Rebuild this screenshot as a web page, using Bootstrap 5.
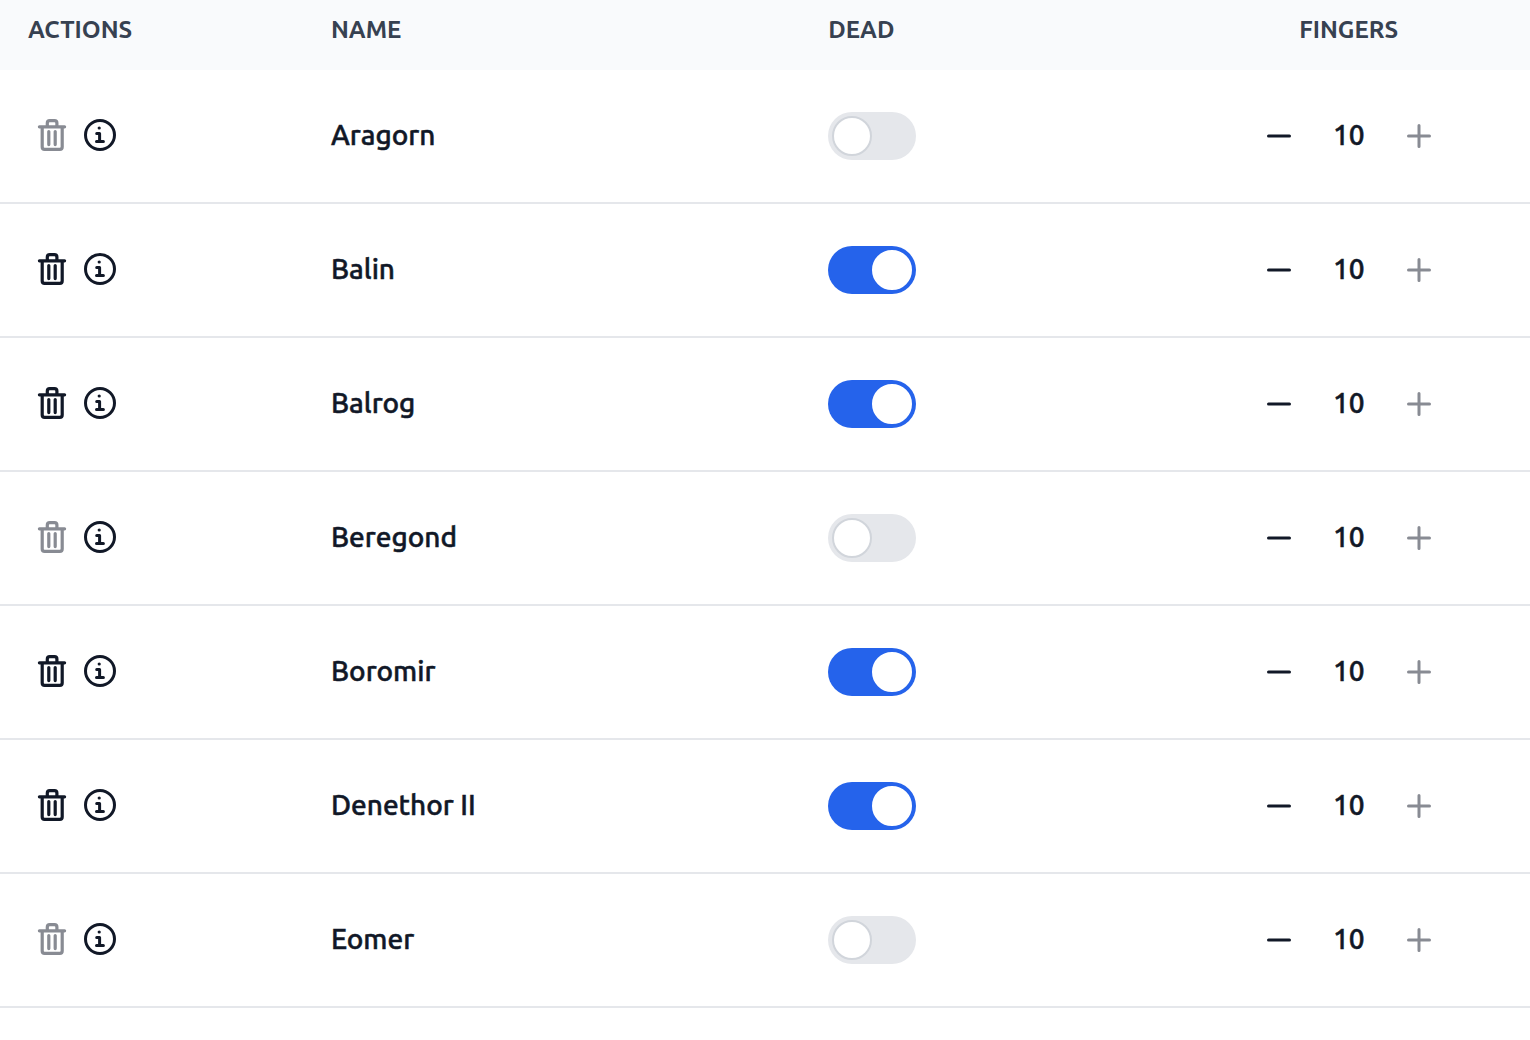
<!DOCTYPE html>
<html lang="en">
<head>
<meta charset="utf-8">
<meta name="viewport" content="width=device-width, initial-scale=1">
<title>Characters</title>
<link href="https://cdn.jsdelivr.net/npm/bootstrap@5.3.0/dist/css/bootstrap.min.css" rel="stylesheet">
<style>
  body { font-family: Ubuntu, "Noto Sans", sans-serif; color: #111827; background: #fff; }
  .roster { table-layout: fixed; border-collapse: separate; border-spacing: 0; color: #111827; font-size: 28px; line-height: 40px; font-weight: 500; }
  .roster > thead th { height: 70px; padding: 10px 28px 20px; background: #f9fafc; color: #374151; font-size: 24px; line-height: 40px; font-weight: 700; border: 0; text-transform: uppercase; vertical-align: top; }
  .roster > tbody td { height: 134px; padding: 0 28px; color: #111827; border-bottom: 2px solid #e5e7eb; background: #fff; box-shadow: none; }
  .roster > tbody td.person { padding-bottom: 2px; }
  .person, .count { font-family: "Ubuntu Medium", Ubuntu, "Noto Sans", sans-serif; -webkit-text-stroke: 0.5px currentColor; }
  .w-actions { width: 19.8%; }
  .w-name { width: 32.5%; }
  .w-dead { width: 24%; }
  .icon-btn { width: 48px; height: 48px; padding: 0; border: 0; background: none; color: #111827; display: inline-flex; align-items: center; justify-content: center; }
  .icon-btn:disabled { color: #888b93; }
  .icon-btn svg { width: 32px; height: 32px; fill: none; stroke: currentColor; stroke-width: 3; stroke-linecap: round; stroke-linejoin: round; }
  .tools { padding-bottom: 2px; }
  .count { width: 92px; padding-bottom: 2px; text-align: center; }
  .toggle { appearance: none; display: block; width: 88px; height: 48px; margin: 0; padding: 4px; border-radius: 24px; background: #e5e7eb; cursor: pointer; }
  .toggle::before { content: ""; display: block; width: 40px; height: 40px; border-radius: 50%; border: 2px solid #d1d5db; background: #fff; }
  .toggle:checked { background: #2563eb; }
  .toggle:checked::before { margin-left: auto; border-color: #fff; }
</style>
</head>
<body>
<svg class="d-none" aria-hidden="true">
  <symbol id="trash" viewBox="0 0 32 32"><path d="M3.4 7.8H28.6M11.3 7.5V4Q11.3 1.6 13.7 1.6H18.5Q20.9 1.6 20.9 4V7.5M6.2 8V28Q6.2 30.4 8.6 30.4H23.8Q26.2 30.4 26.2 28V8M12.8 12.5V25.6M19.2 12.5V25.6" stroke-width="3.2"/></symbol>
  <symbol id="info" viewBox="0 0 32 32"><circle cx="16" cy="16" r="14.5"/><circle cx="15.2" cy="9" r="1.6" fill="currentColor" stroke="none"/><path d="M12.7 14.4H15.6V22.4M12.5 22.4H19.4"/></symbol>
  <symbol id="minus" viewBox="0 0 32 32"><path d="M5.5 16H26.5"/></symbol>
  <symbol id="plus" viewBox="0 0 32 32"><path d="M5.5 16H26.5M16 5.5V26.5"/></symbol>
</svg>
<main>
<table class="table roster w-100 mb-0 align-middle">
  <thead>
    <tr><th scope="col" class="w-actions">Actions</th><th scope="col" class="w-name">Name</th><th scope="col" class="w-dead">Dead</th><th scope="col" class="text-center">Fingers</th></tr>
  </thead>
  <tbody>
    <tr>
      <td><div class="tools d-flex"><button type="button" class="icon-btn" aria-label="Delete Aragorn" disabled><svg><use href="#trash"/></svg></button><button type="button" class="icon-btn" aria-label="About Aragorn"><svg><use href="#info"/></svg></button></div></td>
      <td class="person">Aragorn</td>
      <td><input type="checkbox" role="switch" class="toggle" aria-label="Aragorn is dead"></td>
      <td><div class="d-flex justify-content-center align-items-center"><button type="button" class="icon-btn" aria-label="Remove a finger"><svg><use href="#minus"/></svg></button><span class="count">10</span><button type="button" class="icon-btn" aria-label="Add a finger" disabled><svg><use href="#plus"/></svg></button></div></td>
    </tr>
    <tr>
      <td><div class="tools d-flex"><button type="button" class="icon-btn" aria-label="Delete Balin"><svg><use href="#trash"/></svg></button><button type="button" class="icon-btn" aria-label="About Balin"><svg><use href="#info"/></svg></button></div></td>
      <td class="person">Balin</td>
      <td><input type="checkbox" role="switch" class="toggle" aria-label="Balin is dead" checked></td>
      <td><div class="d-flex justify-content-center align-items-center"><button type="button" class="icon-btn" aria-label="Remove a finger"><svg><use href="#minus"/></svg></button><span class="count">10</span><button type="button" class="icon-btn" aria-label="Add a finger" disabled><svg><use href="#plus"/></svg></button></div></td>
    </tr>
    <tr>
      <td><div class="tools d-flex"><button type="button" class="icon-btn" aria-label="Delete Balrog"><svg><use href="#trash"/></svg></button><button type="button" class="icon-btn" aria-label="About Balrog"><svg><use href="#info"/></svg></button></div></td>
      <td class="person">Balrog</td>
      <td><input type="checkbox" role="switch" class="toggle" aria-label="Balrog is dead" checked></td>
      <td><div class="d-flex justify-content-center align-items-center"><button type="button" class="icon-btn" aria-label="Remove a finger"><svg><use href="#minus"/></svg></button><span class="count">10</span><button type="button" class="icon-btn" aria-label="Add a finger" disabled><svg><use href="#plus"/></svg></button></div></td>
    </tr>
    <tr>
      <td><div class="tools d-flex"><button type="button" class="icon-btn" aria-label="Delete Beregond" disabled><svg><use href="#trash"/></svg></button><button type="button" class="icon-btn" aria-label="About Beregond"><svg><use href="#info"/></svg></button></div></td>
      <td class="person">Beregond</td>
      <td><input type="checkbox" role="switch" class="toggle" aria-label="Beregond is dead"></td>
      <td><div class="d-flex justify-content-center align-items-center"><button type="button" class="icon-btn" aria-label="Remove a finger"><svg><use href="#minus"/></svg></button><span class="count">10</span><button type="button" class="icon-btn" aria-label="Add a finger" disabled><svg><use href="#plus"/></svg></button></div></td>
    </tr>
    <tr>
      <td><div class="tools d-flex"><button type="button" class="icon-btn" aria-label="Delete Boromir"><svg><use href="#trash"/></svg></button><button type="button" class="icon-btn" aria-label="About Boromir"><svg><use href="#info"/></svg></button></div></td>
      <td class="person">Boromir</td>
      <td><input type="checkbox" role="switch" class="toggle" aria-label="Boromir is dead" checked></td>
      <td><div class="d-flex justify-content-center align-items-center"><button type="button" class="icon-btn" aria-label="Remove a finger"><svg><use href="#minus"/></svg></button><span class="count">10</span><button type="button" class="icon-btn" aria-label="Add a finger" disabled><svg><use href="#plus"/></svg></button></div></td>
    </tr>
    <tr>
      <td><div class="tools d-flex"><button type="button" class="icon-btn" aria-label="Delete Denethor II"><svg><use href="#trash"/></svg></button><button type="button" class="icon-btn" aria-label="About Denethor II"><svg><use href="#info"/></svg></button></div></td>
      <td class="person">Denethor II</td>
      <td><input type="checkbox" role="switch" class="toggle" aria-label="Denethor II is dead" checked></td>
      <td><div class="d-flex justify-content-center align-items-center"><button type="button" class="icon-btn" aria-label="Remove a finger"><svg><use href="#minus"/></svg></button><span class="count">10</span><button type="button" class="icon-btn" aria-label="Add a finger" disabled><svg><use href="#plus"/></svg></button></div></td>
    </tr>
    <tr>
      <td><div class="tools d-flex"><button type="button" class="icon-btn" aria-label="Delete Eomer" disabled><svg><use href="#trash"/></svg></button><button type="button" class="icon-btn" aria-label="About Eomer"><svg><use href="#info"/></svg></button></div></td>
      <td class="person">Eomer</td>
      <td><input type="checkbox" role="switch" class="toggle" aria-label="Eomer is dead"></td>
      <td><div class="d-flex justify-content-center align-items-center"><button type="button" class="icon-btn" aria-label="Remove a finger"><svg><use href="#minus"/></svg></button><span class="count">10</span><button type="button" class="icon-btn" aria-label="Add a finger" disabled><svg><use href="#plus"/></svg></button></div></td>
    </tr>
  </tbody>
</table>
</main>
<script src="https://cdn.jsdelivr.net/npm/bootstrap@5.3.0/dist/js/bootstrap.bundle.min.js"></script>
</body>
</html>
